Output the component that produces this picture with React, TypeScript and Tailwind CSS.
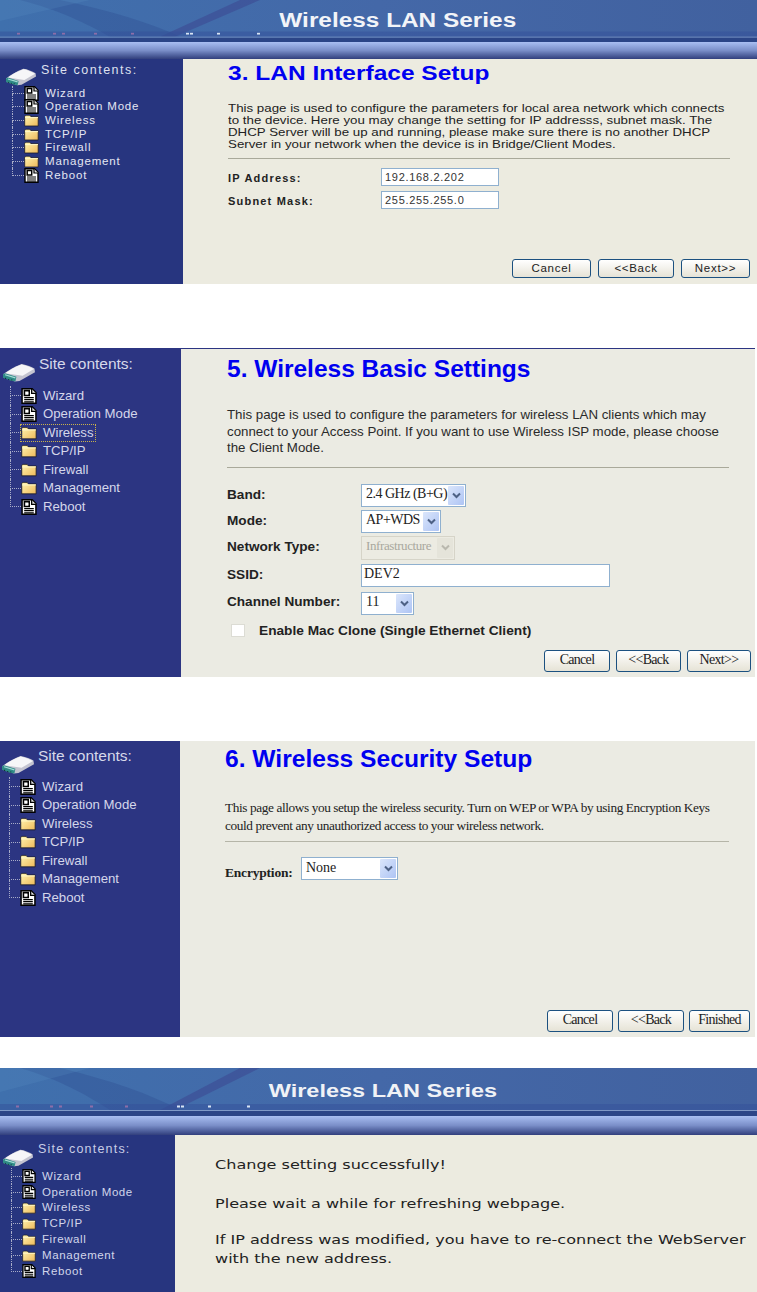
import React from "react";

const Doc = ({ s = 15 }: { s?: number }) => (
  <svg width={s} height={s} viewBox="0 0 15 15" className="shrink-0">
    <path d="M1 .8h9.500l3.500 3.500v10H1z" fill="#fff" stroke="#000" strokeWidth="1.400" />
    <path d="M10 1v4h4" fill="#ddd" stroke="#000" strokeWidth="1.200" />
    <path d="M3.200 2.500h4.500v4.500H3.200z" fill="none" stroke="#000" strokeWidth="1.500" />
    <path d="M5.200 4h1.600v1.600H5.200z" fill="#fff" />
    <path d="M3 9h9M3 11h9M3 13h9" stroke="#000" strokeWidth="1.200" />
  </svg>
);

const Folder = ({ s = 15 }: { s?: number }) => (
  <svg width={s} height={s} viewBox="0 0 15 15" className="shrink-0">
    <defs>
      <linearGradient id="fold" x1="0" y1="0" x2="1" y2="1">
        <stop offset="0" stopColor="#fff4b0" />
        <stop offset="1" stopColor="#eeb95a" />
      </linearGradient>
    </defs>
    <path d="M.7 13V3.200l1-1h4l1.300 1.500h7.200V13z" fill="url(#fold)" stroke="#1b1b28" strokeWidth=".8" />
    <path d="M1 4.600h13" stroke="#fff8c8" strokeWidth="1" />
  </svg>
);

const Disk = ({ w = 33 }: { w?: number }) => (
  <svg width={w} height={w * 0.6} viewBox="0 0 33 19" className="shrink-0">
    <path d="M1 11.500C6 8 12 4 19 1.500c4 .5 9 2.500 12.500 4.500l.5 3.500-15 8.500-4.500.5L1.500 15z" fill="#c4c4d0" />
    <path d="M3 10.500C8 7 13 4 19 2c4 .5 8 2.500 12 4.500L20 13z" fill="#f6f6f8" />
    <path d="M1 11.500l2-1 11 3.500-1 4.500-5-1-7-2.500z" fill="#2f8a86" />
    <path d="M3 12l10 3" stroke="#a6dcd6" strokeWidth="1.200" />
    <path d="M3 15.500h1M6 16.500h1M9 17h1" stroke="#0b3030" strokeWidth="1" />
  </svg>
);

type Kind = "doc" | "folder";
const items: [string, Kind][] = [
  ["Wizard", "doc"],
  ["Operation Mode", "doc"],
  ["Wireless", "folder"],
  ["TCP/IP", "folder"],
  ["Firewall", "folder"],
  ["Management", "folder"],
  ["Reboot", "doc"],
];

type SideProps = {
  box: string;
  head: string;
  diskBox: string;
  title: string;
  tree: string;
  row: string;
  label: string;
  stub: string;
  diskW: number;
  icon: number;
  focus?: string;
};

const Sidebar = ({ box, head, diskBox, title, tree, row, label, stub, diskW, icon, focus }: SideProps) => (
  <aside className={box}>
    <div className={head}>
      <div className={diskBox}>
        <Disk w={diskW} />
      </div>
      <span className={title}>Site contents:</span>
    </div>
    <ul className={tree}>
      {items.map(([name, kind], i) => (
        <li key={name} className={row}>
          <div className={"flex flex-col self-stretch shrink-0 " + stub}>
            <div className="flex-1 border-l border-b border-dotted border-[#a8acc8]" />
            <div className={i === items.length - 1 ? "flex-1" : "flex-1 border-l border-dotted border-[#a8acc8]"} />
          </div>
          <div className={name === focus ? "flex items-center gap-[6px] h-[16px] pr-[1px] outline outline-1 outline-dotted outline-[#c9b24a]" : "flex items-center gap-[6px]"}>
            {kind === "doc" ? <Doc s={icon} /> : <Folder s={icon} />}
            <span className={label}>{name}</span>
          </div>
        </li>
      ))}
    </ul>
  </aside>
);

const Banner = ({ box, bar, text, dots }: { box: string; bar: string; text: string; dots: number[] }) => (
  <>
    <header className={box}>
      <svg viewBox="0 0 757 48" preserveAspectRatio="none" className="absolute inset-0 w-full h-full">
        <path d="M160 42 240 0h20L175 42z" fill="#3d4f95" opacity=".7" />
        <path d="M60 0c50 12 90 26 120 42H110C85 26 60 12 20 0z" fill="#2f4f94" opacity=".4" />
        <path d="M0 0h90L0 24z" fill="#5d94c8" opacity=".2" />
        <path d="M0 36h757v6H0z" fill="#33509a" opacity=".5" />
        {dots.map((x) => (
          <rect key={x} x={x} y="37.500" width="3" height="2" fill={x < 150 ? "#8d6ea8" : "#d8e4f4"} />
        ))}
        <path d="M0 42.500H757" stroke="#8fa6cf" strokeWidth=".8" />
        <path d="M0 45.500H757" stroke="#2b4587" strokeWidth="5" />
      </svg>
      <h1 className={text}>Wireless LAN Series</h1>
    </header>
    <div className={bar} />
  </>
);

const Btn = ({ box, children }: { box: string; children: React.ReactNode }) => (
  <button className={"rounded-[3px] border border-[#1c5180] bg-gradient-to-b from-white to-[#e6e3d6] text-[#222] flex items-center justify-center " + box}>
    {children}
  </button>
);

const Select = ({ box, value, text, disabled }: { box: string; value: string; text: string; disabled?: boolean }) => (
  <div className={"flex items-center justify-between border pl-[4px] pr-[1px] py-[1px] " + (disabled ? "border-[#d6d4c8] bg-[#ecebe2] text-[#a9a89e] " : "border-[#8fb0cf] bg-white text-[#222] ") + box}>
    <span className={"whitespace-nowrap pb-[3px] " + text}>{value}</span>
    <span className={"flex items-center justify-center w-[16px] self-stretch rounded-[1px] " + (disabled ? "bg-[#e5e4da]" : "bg-gradient-to-br from-[#dbe6fb] to-[#aec4f4]")}>
      <svg width="9" height="7" viewBox="0 0 9 7">
        <path d="M1 1.500 4.500 5 8 1.500" fill="none" stroke={disabled ? "#b9b8ae" : "#4d6185"} strokeWidth="2" />
      </svg>
    </span>
  </div>
);

const Row = ({ label, labelBox, children }: { label: string; labelBox: string; children: React.ReactNode }) => (
  <div className="flex items-center">
    <span className={labelBox}>{label}</span>
    {children}
  </div>
);

export default function App() {
  const bold14 = "w-[134px] text-[13.600px] font-bold text-[#222]";
  const serif = "[font-family:'Liberation_Serif',serif]";
  return (
    <div className="w-[757px] h-[1292px] overflow-hidden bg-white [font-family:'Liberation_Sans',Arial,sans-serif]">
      {/* Step 3 */}
      <section className="h-[284px] flex flex-col">
        <Banner
          box="relative h-[42px] bg-gradient-to-r from-[#3f70ad] via-[#4468a8] to-[#41619f] flex justify-center items-start"
          bar="h-[17px] bg-gradient-to-b from-[#a9bff2] via-[#7a8ec8] to-[#323f7d]"
          text="relative ml-[39px] mt-[9px] text-[19.500px] leading-[22px] font-bold scale-x-[1.25] text-[#f2f4f8]"
          dots={[17, 53, 62, 94, 131, 186, 190, 217, 257]}
        />
        <div className="flex-1 flex">
          <Sidebar
            box="w-[183px] bg-[#27357f] pl-[5px] pt-[5px]"
            head="flex items-start gap-[4px]"
            diskBox="mt-[3px]"
            title="text-[12.500px] leading-[12px] tracking-[1.500px] text-[#dfe1ef] font-normal"
            tree="ml-[7px] mt-0"
            row="h-[13.700px] flex items-center"
            label="text-[11.500px] leading-[13px] tracking-[0.850px] text-[#e4e6f2]"
            stub="w-[12px]"
            diskW={32}
            icon={15}
          />
          <main className="flex-1 bg-[#ecebe0] pl-[45px] pr-[7px] flex flex-col">
            <h2 className="mt-[2px] text-[20px] leading-[24px] font-bold origin-left scale-x-[1.225] whitespace-nowrap text-[#0000f0]">3. LAN Interface Setup</h2>
            <p className="mt-[17px] text-[11px] leading-[12.100px] origin-left scale-x-[1.21] whitespace-nowrap text-[#222]">
              This page is used to configure the parameters for local area network which connects
              <br />to the device. Here you may change the setting for IP addresss, subnet mask. The
              <br />DHCP Server will be up and running, please make sure there is no another DHCP
              <br />Server in your network when the device is in Bridge/Client Modes.
            </p>
            <hr className="mt-[8px] mr-[20px] border-t border-[#a9a99a]" />
            <div className="mt-[9px] flex flex-col gap-[5px]">
              {[["IP Address:", "192.168.2.202"], ["Subnet Mask:", "255.255.255.0"]].map(([l, v]) => (
                <Row key={l} label={l} labelBox="w-[153px] pt-[1px] text-[11px] font-bold tracking-[1.200px] text-[#222]">
                  <div className="w-[118px] h-[18px] border border-[#8fb0cf] bg-white pl-[3px] text-[11px] leading-[16px] tracking-[0.700px] text-[#333]">{v}</div>
                </Row>
              ))}
            </div>
            <div className="mt-auto mb-[6px] flex justify-end gap-[7px] text-[11.500px] tracking-[0.700px]">
              <Btn box="w-[79px] h-[19px]">Cancel</Btn>
              <Btn box="w-[76px] h-[19px]">{"<<Back"}</Btn>
              <Btn box="w-[69px] h-[19px]">{"Next>>"}</Btn>
            </div>
          </main>
        </div>
      </section>

      {/* Step 5 */}
      <section className="mt-[64px] w-[755px] h-[329px] flex border-t border-[#2c3582]">
        <Sidebar
          box="w-[181px] bg-[#2c3582] pl-[2px] pt-[5px]"
          head="flex items-start gap-[3px]"
          diskBox="mt-[8px]"
          title="text-[15.500px] leading-[20px] text-[#d7d9ea]"
          tree="ml-[8px] mt-[4px]"
          row="h-[18.500px] flex items-center"
          label="text-[13.200px] leading-[16px] text-[#d5d7ea]"
          stub="w-[11px]"
          diskW={34}
          icon={16}
          focus="Wireless"
        />
        <main className="flex-1 bg-[#ebebe3] pl-[46px] pr-[4px] flex flex-col">
          <h2 className="mt-[6px] text-[24.500px] leading-[28px] font-bold text-[#0000f0]">5. Wireless Basic Settings</h2>
          <p className="mt-[24px] text-[13.300px] leading-[16.500px] text-[#2a2a2a]">
            This page is used to configure the parameters for wireless LAN clients which may
            <br />connect to your Access Point. If you want to use Wireless ISP mode, please choose
            <br />the Client Mode.
          </p>
          <hr className="mt-[10px] mr-[22px] border-t border-[#a9a99a]" />
          <div className="mt-[16px] flex flex-col gap-[3px]">
            <Row label="Band:" labelBox={bold14}>
              <Select box="w-[105px] h-[23px]" text={"text-[14px] tracking-[-0.500px] " + serif} value="2.4 GHz (B+G)" />
            </Row>
            <Row label="Mode:" labelBox={bold14}>
              <Select box="w-[80px] h-[23px]" text={"text-[14px] tracking-[-0.500px] " + serif} value="AP+WDS" />
            </Row>
            <Row label="Network Type:" labelBox={bold14}>
              <Select disabled box="w-[94px] h-[24px]" text={"text-[13px] tracking-[-0.400px] " + serif} value="Infrastructure" />
            </Row>
            <div className="mt-[1px]">
              <Row label="SSID:" labelBox={bold14}>
                <div className={"w-[249px] h-[23px] border border-[#8fb0cf] bg-white pl-[2px] text-[14px] leading-[18px] text-[#222] " + serif}>DEV2</div>
              </Row>
            </div>
            <Row label="Channel Number:" labelBox={bold14}>
              <Select box="w-[53px] h-[23px] mt-[2px]" text={"text-[14px] " + serif} value="11" />
            </Row>
            <div className="mt-[3px] flex items-center pl-[4px]">
              <span className="w-[14px] h-[13px] bg-white border border-[#dcdcd4]" />
              <span className="ml-[14px] text-[13.700px] font-bold text-[#222]">Enable Mac Clone (Single Ethernet Client)</span>
            </div>
          </div>
          <div className={"mt-auto mb-[5px] flex justify-end gap-[6px] text-[14px] tracking-[-0.700px] " + serif}>
            <Btn box="w-[66px] h-[22px] pb-[3px]">Cancel</Btn>
            <Btn box="w-[65px] h-[22px] pb-[3px]">{"<<Back"}</Btn>
            <Btn box="w-[64px] h-[22px] pb-[3px]">{"Next>>"}</Btn>
          </div>
        </main>
      </section>

      {/* Step 6 */}
      <section className="mt-[64px] w-[755px] h-[296px] flex">
        <Sidebar
          box="w-[180px] bg-[#2c3582] pl-[1px] pt-[5px]"
          head="flex items-start gap-[3px]"
          diskBox="mt-[8px]"
          title="text-[15.500px] leading-[20px] text-[#d7d9ea]"
          tree="ml-[8px] mt-[3px]"
          row="h-[18.500px] flex items-center"
          label="text-[13.200px] leading-[16px] text-[#d5d7ea]"
          stub="w-[11px]"
          diskW={34}
          icon={16}
        />
        <main className="flex-1 bg-[#ebebe3] pl-[45px] pr-[5px] flex flex-col">
          <h2 className="mt-[4px] text-[24.600px] leading-[28px] font-bold text-[#0000f0]">6. Wireless Security Setup</h2>
          <p className={"mt-[26px] text-[13.300px] leading-[17.500px] tracking-[-0.400px] text-[#222] " + serif}>
            This page allows you setup the wireless security. Turn on WEP or WPA by using Encryption Keys
            <br />could prevent any unauthorized access to your wireless network.
          </p>
          <hr className="mt-[7px] mr-[21px] border-t border-[#b5b5a8]" />
          <div className="mt-[12px] flex items-center">
            <span className={"w-[76px] pt-[9px] text-[13.500px] font-bold tracking-[-0.200px] text-[#222] " + serif}>Encryption:</span>
            <Select box="w-[97px] h-[23px]" text={"text-[14px] " + serif} value="None" />
          </div>
          <div className={"mt-auto mb-[5px] flex justify-end gap-[5px] text-[14px] tracking-[-0.700px] " + serif}>
            <Btn box="w-[66px] h-[22px] pb-[3px]">Cancel</Btn>
            <Btn box="w-[66px] h-[22px] pb-[3px]">{"<<Back"}</Btn>
            <Btn box="w-[61px] h-[22px] pb-[3px]">Finished</Btn>
          </div>
        </main>
      </section>

      {/* Finished */}
      <section className="mt-[31px] h-[224px] flex flex-col">
        <Banner
          box="relative h-[48px] bg-gradient-to-r from-[#3f70ad] via-[#4468a8] to-[#41619f] flex justify-center items-start"
          bar="h-[19px] bg-gradient-to-b from-[#a9bff2] via-[#7a8ec8] to-[#323f7d]"
          text="relative ml-[9px] mt-[12px] text-[18.500px] leading-[22px] font-bold scale-x-[1.270] text-[#f0f2f6]"
          dots={[16, 50, 59, 90, 125, 177, 181, 208, 247]}
        />
        <div className="flex-1 flex">
          <Sidebar
            box="w-[175px] bg-[#27357f] pl-[2px] pt-[7px]"
            head="flex items-start gap-[4px]"
            diskBox="mt-[6px]"
            title="text-[12.500px] leading-[14px] tracking-[1.200px] text-[#c9cde6]"
            tree="ml-[9px] mt-[1px]"
            row="h-[15.900px] flex items-center"
            label="text-[11.500px] leading-[13px] tracking-[0.600px] text-[#d2d5ea]"
            stub="w-[11px]"
            diskW={32}
            icon={14}
          />
          <main className="flex-1 bg-[#ecebe0] pl-[40px] pt-[20px] text-[#222] [font-family:'DejaVu_Sans',sans-serif]">
            <div className="origin-left scale-x-[1.235] text-[13px] leading-[19px] whitespace-nowrap">
              <p>Change setting successfully!</p>
              <p className="mt-[20px]">Please wait a while for refreshing webpage.</p>
              <p className="mt-[17px]">
                If IP address was modified, you have to re-connect the WebServer
                <br />with the new address.
              </p>
            </div>
          </main>
        </div>
      </section>
    </div>
  );
}
